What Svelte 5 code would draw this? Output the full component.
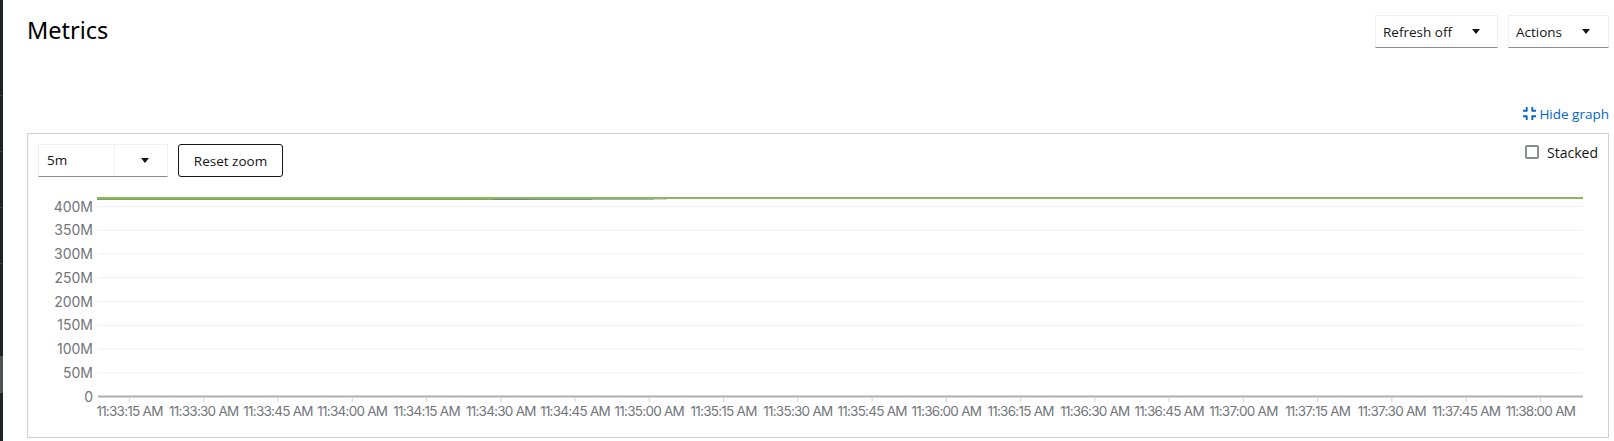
<script>
  const yLabels = ['400M', '350M', '300M', '250M', '200M', '150M', '100M', '50M', '0'];
  const xLabels = [
    '11:33:15 AM', '11:33:30 AM', '11:33:45 AM', '11:34:00 AM', '11:34:15 AM', '11:34:30 AM',
    '11:34:45 AM', '11:35:00 AM', '11:35:15 AM', '11:35:30 AM', '11:35:45 AM', '11:36:00 AM',
    '11:36:15 AM', '11:36:30 AM', '11:36:45 AM', '11:37:00 AM', '11:37:15 AM', '11:37:30 AM',
    '11:37:45 AM', '11:38:00 AM'
  ];
  const gridY = (i) => 206.5 + i * 23.75;
  const tickX = (i) => 129.5 + i * 74.26;
  const overlays = [
    { x1: 97, x2: 493, color: '#80a35c' },
    { x1: 493, x2: 530, color: '#6f8a7c' },
    { x1: 530, x2: 592, color: '#7390a0' },
    { x1: 592, x2: 654, color: '#9ab4b2' },
    { x1: 654, x2: 667, color: '#cbdad2' }
  ];
</script>

<div class="shell">
  <aside class="rail">
    <i class="seg a"></i><i class="seg b"></i><i class="seg b"></i><i class="seg b"></i>
    <i class="seg d"></i><i class="seg active"></i>
  </aside>
  <main class="page">
    <header class="head">
      <h1>Metrics</h1>
      <div class="actions">
        <button class="drop refresh">Refresh off<span class="caret"></span></button>
        <button class="drop act">Actions<span class="caret"></span></button>
      </div>
    </header>
    <div class="hide-row">
      <a class="hide" href="#top">
        <svg width="13" height="15" viewBox="0 0 448 512" fill="#0066cc">
          <path d="M436 192H312c-13.3 0-24-10.7-24-24V44c0-6.6 5.4-12 12-12h40c6.6 0 12 5.4 12 12v84h84c6.6 0 12 5.4 12 12v40c0 6.6-5.4 12-12 12zm-276-24V44c0-6.6-5.4-12-12-12H108c-6.6 0-12 5.4-12 12v84H12c-6.6 0-12 5.4-12 12v40c0 6.6 5.4 12 12 12h124c13.3 0 24-10.7 24-24zm0 300V344c0-13.3-10.7-24-24-24H12c-6.6 0-12 5.4-12 12v40c0 6.6 5.4 12 12 12h84v84c0 6.6 5.4 12 12 12h40c6.6 0 12-5.4 12-12zm192 0v-84h84c6.6 0 12-5.4 12-12v-40c0-6.6-5.4-12-12-12H312c-13.3 0-24 10.7-24 24v124c0 6.6 5.4 12 12 12h40c6.6 0 12-5.4 12-12z" />
        </svg>
        Hide graph
      </a>
    </div>
    <section class="card">
      <div class="tools">
        <div class="range">
          <span class="value">5m</span>
          <span class="toggle"><span class="caret"></span></span>
        </div>
        <button class="reset">Reset zoom</button>
        <label class="stacked"><span class="box"></span>Stacked</label>
      </div>
      <svg class="chart" width="1579" height="260" viewBox="0 0 1579 260">
        <g transform="translate(-28,-177)">
          {#each yLabels as label, i}
            <line x1="98" x2="1583" y1={gridY(i)} y2={gridY(i)}
              class={i === 8 ? 'axis' : 'grid'} />
            <text class="ylab" x="93" y={gridY(i) + 5}>{label}</text>
          {/each}
          {#each xLabels as label, i}
            <line class="tick" x1={tickX(i)} x2={tickX(i)} y1="397" y2="402" />
            <text class="xlab" x={tickX(i)} y="416">{label}</text>
          {/each}
          <line class="series" x1="97" x2="1583" y1="198" y2="198" />
          {#each overlays as seg}
            <line x1={seg.x1} x2={seg.x2} y1="199.5" y2="199.5" stroke={seg.color} stroke-width="1" />
          {/each}
        </g>
      </svg>
    </section>
  </main>
</div>

<style>
  :global(body) {
    margin: 0;
    background: #fff;
  }
  .shell {
    display: flex;
    height: 441px;
    overflow: hidden;
    font-family: "Open Sans", "Liberation Sans", sans-serif;
    font-size: 13.5px;
    color: #151515;
  }
  .rail {
    width: 3px;
    flex: none;
    display: flex;
    flex-direction: column;
    background: #212427;
  }
  .seg { display: block; box-sizing: border-box; border-bottom: 1px solid #3c3f42; }
  .seg.a { height: 96px; }
  .seg.b { height: 56px; }
  .seg.d { height: 92px; border-bottom: 0; }
  .seg.active { height: 37px; background: #4f5255; border-bottom: 0; }
  .page {
    flex: 1;
    min-width: 0;
    padding: 15px 5px 0 24px;
    box-sizing: border-box;
  }
  .head {
    display: flex;
    justify-content: space-between;
    align-items: flex-start;
    height: 88px;
  }
  h1 {
    margin: -1px 0 0;
    font-size: 23.5px;
    font-weight: 400;
    line-height: 32px;
    color: #000;
    font-family: "Noto Sans", "Open Sans", sans-serif;
  }
  .actions {
    display: flex;
    gap: 10px;
  }
  button {
    font: inherit;
    background: #fff;
    color: #151515;
    cursor: pointer;
  }
  .drop {
    height: 33px;
    margin: 0;
    display: flex;
    align-items: center;
    justify-content: space-between;
    border: 1px solid #f0f0f0;
    border-bottom-color: #8a8d90;
    box-sizing: border-box;
  }
  .refresh { width: 123px; padding: 0 17px 0 7px; }
  .act { width: 101px; padding: 0 18px 0 7px; }
  .caret {
    display: inline-block;
    width: 0;
    height: 0;
    border: 4px solid transparent;
    border-top: 5px solid #151515;
    border-bottom: 0;
  }
  .hide-row {
    display: flex;
    justify-content: flex-end;
    height: 30px;
  }
  .hide {
    display: inline-flex;
    align-items: center;
    gap: 3px;
    height: 21px;
    color: #0066cc;
    text-decoration: none;
  }
  .card {
    height: 305px;
    border: 1px solid #d2d2d2;
    box-sizing: border-box;
    overflow: hidden;
  }
  .tools {
    display: flex;
    align-items: flex-start;
    gap: 10px;
    padding: 10px 10px 0;
    height: 33px;
  }
  .range {
    display: flex;
    height: 33px;
    width: 130px;
    box-sizing: border-box;
    border: 1px solid #f0f0f0;
    border-bottom-color: #8a8d90;
  }
  .value {
    width: 76px;
    box-sizing: border-box;
    padding-left: 8px;
    line-height: 31px;
    border-right: 1px solid #f0f0f0;
  }
  .toggle {
    flex: 1;
    display: flex;
    align-items: center;
    justify-content: center;
    padding-left: 7px;
  }
  .reset {
    height: 33px;
    width: 105px;
    padding: 0;
    border: 1px solid #151515;
    border-radius: 3px;
  }
  .stacked {
    margin-left: auto;
    display: flex;
    align-items: center;
    gap: 8px;
    height: 16px;
    font-size: 14px;
    color: #151515;
  }
  .box {
    width: 14px;
    height: 14px;
    box-sizing: border-box;
    border: 2px solid #8a8d90;
    border-radius: 2px;
  }
  .chart {
    display: block;
  }
  .grid { stroke: #f0f0f0; stroke-width: 1; }
  .axis { stroke: #b0b0b0; stroke-width: 2; }
  .tick { stroke: #d2d2d2; stroke-width: 1; }
  .series { stroke: #8cb85c; stroke-width: 2; }
  .ylab, .xlab {
    fill: #72767b;
    font-family: Inter, "Open Sans", sans-serif;
  }
  .ylab { text-anchor: end; font-size: 14px; }
  .xlab { text-anchor: middle; font-size: 13.5px; letter-spacing: -0.75px; }
</style>
